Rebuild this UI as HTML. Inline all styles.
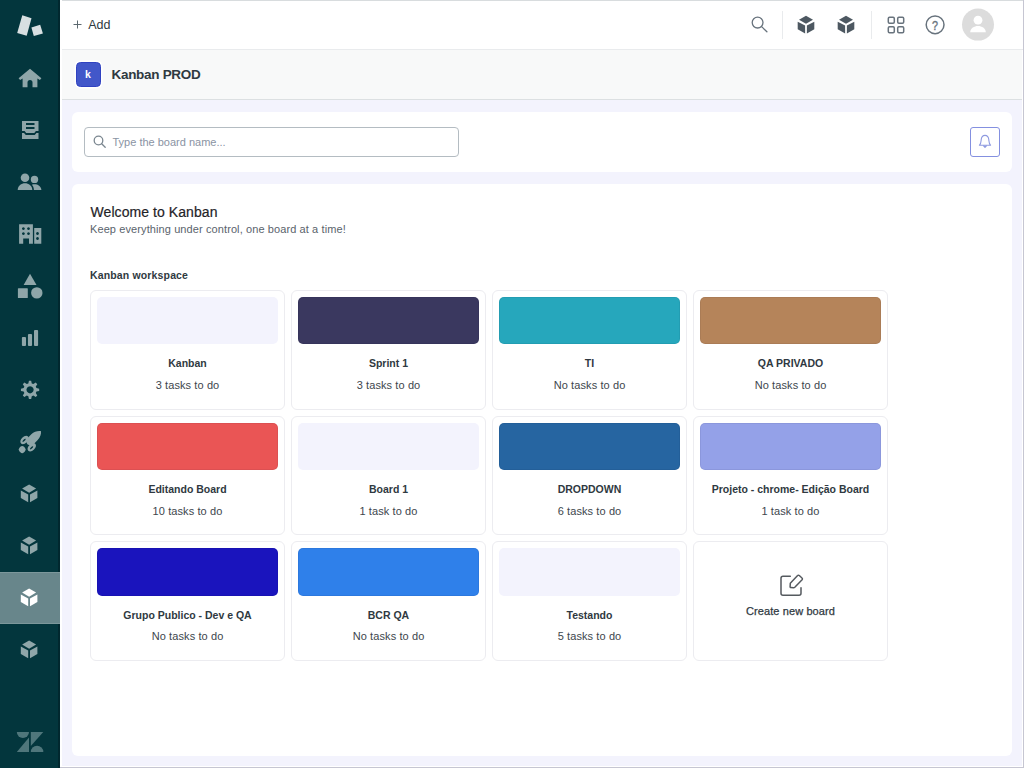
<!DOCTYPE html>
<html lang="en">
<head>
<meta charset="utf-8">
<title>Kanban PROD</title>
<style>
*{box-sizing:border-box;margin:0;padding:0}
html,body{width:1024px;height:768px;overflow:hidden;background:#fff}
body{font-family:"Liberation Sans",sans-serif;color:#2f3941;position:relative;-webkit-font-smoothing:antialiased}
.abs{position:absolute}
/* sidebar */
#side{position:absolute;left:0;top:0;width:60px;height:768px;background:#03363d;box-shadow:inset -2px 0 0 #01282f}
#side .on{position:absolute;left:0;top:572px;width:60px;height:52px;background:#68868b;border:1px solid #7c979b;border-left:0;border-right:0}
#side svg{position:absolute;left:0;top:0;display:block}
/* top bar */
#top{position:absolute;left:60px;top:0;width:964px;height:50px;background:#fff;border-top:1px solid #d8dcde;border-bottom:1px solid #e9ebed}
#topsvg{position:absolute;left:0;top:0;display:block}
#add{position:absolute;left:28.2px;top:16px;font-size:12.5px;color:#2f3941;line-height:16px;white-space:nowrap}
#apphead{position:absolute;left:62px;top:50px;width:960px;height:50px;background:#f8f9f9;border-bottom:1px solid #dce0e2}
#kicon{position:absolute;left:14px;top:12px;width:25px;height:25px;border-radius:4.5px;background:#4257c9;border:1px solid #3042c1;box-shadow:0 0 0 1.5px #fff;color:#fff;font-size:10.5px;font-weight:bold;text-align:center;line-height:22.5px;text-indent:-1px}
#ktitle{position:absolute;left:49.5px;top:15px;font-size:13.5px;font-weight:bold;color:#2f3941;line-height:20px;white-space:nowrap;letter-spacing:-0.3px}
/* content */
#content{position:absolute;left:62px;top:100px;width:960px;height:666px;background:#f3f3fd}
.panel{position:absolute;background:#fff;border-radius:6px}
#search{left:10px;top:12px;width:940px;height:60px}
#sinput{position:absolute;left:12px;top:15px;width:375px;height:30px;border:1px solid #b4bcc2;border-radius:4px;background:#fff}
#sinput span{position:absolute;left:27.5px;top:8px;font-size:11px;line-height:13px;color:#8a93a3;white-space:nowrap}
#bell{position:absolute;left:898px;top:15px;width:30px;height:30px;border:1px solid #8490e0;border-radius:3px;background:#fff}
#main{left:10px;top:84px;width:940px;height:572px}
#h1{position:absolute;left:18.5px;top:19px;font-size:14px;line-height:18px;color:#1f2328;white-space:nowrap;letter-spacing:.07px;-webkit-text-stroke:.2px #1f2328}
#h2{position:absolute;left:18px;top:38px;font-size:11px;line-height:14px;color:#5a636c;white-space:nowrap;letter-spacing:.1px}
#h3{position:absolute;left:18px;top:84px;font-size:10.5px;line-height:14px;font-weight:bold;color:#2f3941;white-space:nowrap;letter-spacing:.15px}
.card{position:absolute;width:195px;height:120px;border:1px solid #ececf0;border-radius:6px;background:#fff}
.card .c{position:absolute;left:6px;top:6px;width:181px;height:47px;border-radius:5px;box-shadow:inset 0 0 0 1px rgba(0,0,40,.06)}
.card .c.d{box-shadow:none}
.card .t{position:absolute;left:0;width:193px;top:65px;text-align:center;font-size:10.5px;line-height:14px;font-weight:bold;color:#2f3941;white-space:nowrap}
.card .s{position:absolute;left:0;width:193px;top:87px;text-align:center;font-size:11px;line-height:14px;color:#3d464d;white-space:nowrap;letter-spacing:.1px}
/* frame edges */
#wl{position:absolute;left:60px;top:0;width:2px;height:767px;background:#fff}
#er{position:absolute;right:0;top:0;width:1px;height:768px;background:#c6c6d2}
#eb{position:absolute;left:60px;bottom:0;width:964px;height:1px;background:#c6c6d2}
</style>
</head>
<body>
<div id="side">
<div class="on"></div>
<svg width="60" height="768" viewBox="0 0 60 768">
<!-- product logo -->
<g fill="#d8dfe1">
<polygon points="22.3,15.3 31.5,18.2 26.7,35.8 17.2,32.9"/>
<polygon points="31.4,27.5 40.2,24.8 42.9,33.4 33.8,36.1"/>
</g>
<g fill="#8fa6a9">
<!-- home -->
<path d="M30,68.7 L41.4,78.3 L39.9,80.1 L37.4,78.6 L37.4,87.3 L32.5,87.3 L32.5,82.6 A2.5,2.5 0 0 0 27.5,82.6 L27.5,87.3 L22.6,87.3 L22.6,78.6 L20.1,80.1 L18.6,78.3 Z"/>
<!-- views -->
<path fill-rule="evenodd" d="M22,121 h16.5 v10 h-2.6 l-1.6,2 h-8.1 l-1.6,-2 h-2.6 z M26,123.1 v1.9 h8.5 v-1.9 z M26,127 v1.9 h8.5 v-1.9 z"/>
<path d="M22,133 h2 l1.8,2.1 h8.9 l1.8,-2.1 h2 v6.1 h-16.5 z"/>
<!-- customers -->
<circle cx="25" cy="177.8" r="4.3"/>
<path d="M17.7,190 C17.9,181 32.1,181 32.3,190 Z"/>
<circle cx="34.5" cy="179.4" r="3.7"/>
<path d="M33.9,190 C33.8,187.6 33,185.8 31.9,184.8 C35.5,183.4 41,185 41.4,190 Z"/>
<!-- organizations -->
<path fill-rule="evenodd" d="M19.1,224.2 h13.8 v19.5 h-3.9 v-5.2 h-5.8 v5.2 h-4.1 z M23.4,227.2 a1.4,1.4 0 1 0 0.01,0 z M28.5,227.2 a1.4,1.4 0 1 0 0.01,0 z M23.4,232.2 a1.4,1.4 0 1 0 0.01,0 z M28.5,232.2 a1.4,1.4 0 1 0 0.01,0 z"/>
<path fill-rule="evenodd" d="M34.2,228.1 h7.1 v15.6 h-7.1 z M37.5,232.1 a1.4,1.4 0 1 0 0.01,0 z M37.5,237.1 a1.4,1.4 0 1 0 0.01,0 z"/>
<!-- shapes -->
<polygon points="30,273.8 36.5,284.9 23.6,284.9"/>
<rect x="17.9" y="288.2" width="9.9" height="9.9" rx="0.6"/>
<circle cx="36.8" cy="292.9" r="5.7"/>
<!-- reporting -->
<rect x="21.9" y="337" width="4.1" height="8.9" rx="1"/>
<rect x="27.95" y="334.1" width="4.1" height="11.8" rx="1"/>
<rect x="34" y="330" width="4.1" height="15.9" rx="1"/>
<!-- gear -->
<path fill-rule="evenodd" d="M28.34,383.42 L28.93,380.67 L31.17,380.67 L31.76,383.42 L33.35,384.08 L35.71,382.55 L37.30,384.14 L35.77,386.50 L36.43,388.09 L39.18,388.68 L39.18,390.92 L36.43,391.51 L35.77,393.10 L37.30,395.46 L35.71,397.05 L33.35,395.52 L31.76,396.18 L31.17,398.93 L28.93,398.93 L28.34,396.18 L26.75,395.52 L24.39,397.05 L22.80,395.46 L24.33,393.10 L23.67,391.51 L20.92,390.92 L20.92,388.68 L23.67,388.09 L24.33,386.50 L22.80,384.14 L24.39,382.55 L26.75,384.08 Z M30.05,386.20 a3.60,3.60 0 1 0 0.01,0 z"/>
<!-- rocket -->
<g transform="translate(34,437.6) rotate(45)">
<path d="M0.3,-9.5 C2.6,-8 4.4,-4.5 4.4,-0.5 L4.4,4 C4.4,6.5 3,8.8 0,9.4 C-3,8.8 -4.3,6.5 -4.3,4 L-4.3,-0.5 C-4.3,-4.5 -2,-8 0.3,-9.5 Z"/>
<path fill-rule="evenodd" d="M-5,3.4 C-6.9,3.4 -8.2,5.6 -8.2,8.4 C-8.2,11.2 -6.9,13.3 -5,13.3 C-3.1,13.3 -1.9,11.2 -1.9,8.4 C-1.9,5.6 -3.1,3.4 -5,3.4 Z M-5.1,6.8 C-5.6,6.8 -5.9,7.7 -5.9,8.9 C-5.9,10.1 -5.6,11 -5.1,11 C-4.6,11 -4.3,10.1 -4.3,8.9 C-4.3,7.7 -4.6,6.8 -5.1,6.8 Z"/>
<path fill-rule="evenodd" d="M5.2,3.4 C7.1,3.4 8.4,5.6 8.4,8.4 C8.4,11.2 7.1,13.3 5.2,13.3 C3.3,13.3 2.1,11.2 2.1,8.4 C2.1,5.6 3.3,3.4 5.2,3.4 Z M5.5,6.8 C6,6.8 6.3,7.7 6.3,8.9 C6.3,10.1 6,11 5.5,11 C5,11 4.7,10.1 4.7,8.9 C4.7,7.7 5,6.8 5.5,6.8 Z"/>
<rect x="-3.1" y="13.6" width="6.4" height="6.4" rx="2.6"/>
</g>
<!-- cubes -->
<g id="cubeA">
<polygon points="29.1,484.6 36.1,488.6 29.1,492.7 22.1,488.6"/>
<polygon points="20.8,490.6 28.2,494.4 28.2,502.3 20.8,498.1"/>
<polygon points="30,494.4 37.4,490.6 37.4,498.1 30,502.3"/>
</g>
<use href="#cubeA" y="52"/>
<use href="#cubeA" y="156"/>
</g>
<use href="#cubeA" y="104" fill="#ffffff"/>
<!-- zendesk -->
<g fill="#4f767b">
<path d="M16.8,731.9 H29 A6.1,6.1 0 0 1 16.8,731.9 Z"/>
<polygon points="29,737.6 29,751.9 16.8,751.9"/>
<polygon points="30.8,731.9 43.3,731.9 30.8,746"/>
<path d="M30.8,751.9 A6.25,6.25 0 0 1 43.3,751.9 Z"/>
</g>
</svg>
</div>
<div id="top">
  <svg id="topsvg" width="964" height="49" viewBox="60 1 964 49">
    <path d="M73.5,24.5 H81.5 M77.5,20.5 V28.5" stroke="#5c6970" stroke-width="1" fill="none"/>
    <g fill="none" stroke="#68737d" stroke-width="1.3" stroke-linecap="round">
      <circle cx="757.6" cy="22.6" r="5.4"/>
      <path d="M761.6,26.6 L766.9,31.8"/>
    </g>
    <rect x="782" y="11" width="1" height="28" fill="#e9ebed"/>
    <rect x="871" y="11" width="1" height="28" fill="#e9ebed"/>
    <g id="cubeT" fill="#4d5861">
      <polygon points="806,15.7 813,19.7 806,23.8 799,19.7"/>
      <polygon points="797.7,21.7 805.1,25.5 805.1,33.4 797.7,29.2"/>
      <polygon points="806.9,25.5 814.3,21.7 814.3,29.2 806.9,33.4"/>
    </g>
    <use href="#cubeT" x="40"/>
    <g fill="none" stroke="#68737d" stroke-width="1.5">
      <rect x="888.3" y="17.3" width="6" height="6" rx="1.2"/>
      <rect x="897.7" y="17.3" width="6" height="6" rx="1.2"/>
      <rect x="888.3" y="26.7" width="6" height="6" rx="1.2"/>
      <rect x="897.7" y="26.7" width="6" height="6" rx="1.2"/>
      <circle cx="935.1" cy="24.8" r="8.9"/>
    </g>
    <text x="935.1" y="29.8" text-anchor="middle" font-family="Liberation Sans, sans-serif" font-size="13.5" fill="#68737d" stroke="#68737d" stroke-width=".4" textLength="6" lengthAdjust="spacingAndGlyphs">?</text>
    <circle cx="978" cy="24.6" r="16" fill="#dcdcdc"/>
    <circle cx="978" cy="20.2" r="4.4" fill="#ffffff"/>
    <path d="M970.2,32.3 C970.6,24 985.4,24 985.8,32.3 Z" fill="#ffffff"/>
  </svg>
  <div id="add">Add</div>
</div>
<div id="apphead">
  <div id="kicon">k</div>
  <div id="ktitle">Kanban PROD</div>
</div>
<div id="content">
  <div class="panel" id="search">
    <div id="sinput"><svg width="16" height="16" viewBox="0 0 16 16" style="position:absolute;left:7px;top:6px"><g fill="none" stroke="#7b8790" stroke-width="1.3" stroke-linecap="round"><circle cx="6.5" cy="6.5" r="4.3"/><path d="M9.7,9.7 L13.2,13.2"/></g></svg><span>Type the board name...</span></div>
    <div id="bell"><svg width="28" height="28" viewBox="0 0 28 28" style="position:absolute;left:0;top:-0.7px"><g fill="none" stroke="#8e9ae0" stroke-width="1.1" stroke-linejoin="round" stroke-linecap="round"><path d="M8.4,18.2 C10.1,17 10,14.6 10.2,12.6 C10.5,9.9 12,8.4 14,8.4 C16,8.4 17.5,9.9 17.8,12.6 C18,14.6 17.9,17 19.6,18.2 Z"/><path d="M12.6,18.8 L14,20.3 L15.4,18.8" fill="#8e9ae0"/></g></svg></div>
  </div>
  <div class="panel" id="main">
    <div id="h1">Welcome to Kanban</div>
    <div id="h2">Keep everything under control, one board at a time!</div>
    <div id="h3">Kanban workspace</div>

    <div class="card" style="left:18px;top:106px"><div class="c d" style="background:#f3f3fd"></div><div class="t">Kanban</div><div class="s">3 tasks to do</div></div>
    <div class="card" style="left:219px;top:106px"><div class="c" style="background:#3a385f"></div><div class="t">Sprint 1</div><div class="s">3 tasks to do</div></div>
    <div class="card" style="left:420px;top:106px"><div class="c" style="background:#26a7bc"></div><div class="t">TI</div><div class="s">No tasks to do</div></div>
    <div class="card" style="left:621px;top:106px"><div class="c" style="background:#b5845a"></div><div class="t">QA PRIVADO</div><div class="s">No tasks to do</div></div>

    <div class="card" style="left:18px;top:232px;height:119px"><div class="c" style="background:#ea5555"></div><div class="t">Editando Board</div><div class="s">10 tasks to do</div></div>
    <div class="card" style="left:219px;top:232px;height:119px"><div class="c d" style="background:#f3f3fd"></div><div class="t">Board 1</div><div class="s">1 task to do</div></div>
    <div class="card" style="left:420px;top:232px;height:119px"><div class="c" style="background:#2665a1"></div><div class="t">DROPDOWN</div><div class="s">6 tasks to do</div></div>
    <div class="card" style="left:621px;top:232px;height:119px"><div class="c" style="background:#94a1e8"></div><div class="t">Projeto - chrome- Edição Board</div><div class="s">1 task to do</div></div>

    <div class="card" style="left:18px;top:357px"><div class="c" style="height:48px;background:#1a14bd"></div><div class="t" style="top:66px">Grupo Publico - Dev e QA</div><div class="s">No tasks to do</div></div>
    <div class="card" style="left:219px;top:357px"><div class="c" style="height:48px;background:#2f80ea"></div><div class="t" style="top:66px">BCR QA</div><div class="s">No tasks to do</div></div>
    <div class="card" style="left:420px;top:357px"><div class="c d" style="height:48px;background:#f3f3fd"></div><div class="t" style="top:66px">Testando</div><div class="s">5 tasks to do</div></div>
    <div class="card" style="left:621px;top:357px"><svg width="30" height="30" viewBox="775 570 30 30" style="position:absolute;left:81px;top:28px"><g fill="none" stroke="#555a5f" stroke-width="1.5" stroke-linecap="round" stroke-linejoin="round"><path d="M790.3,576.3 H783 A2,2 0 0 0 781,578.3 V593.3 A2,2 0 0 0 783,595.3 H799 A2,2 0 0 0 801,593.3 V587.8"/><path d="M790.3,583.3 L797.6,575.6 A1.2,1.2 0 0 1 799.3,575.5 L802,578 A1.2,1.2 0 0 1 802.1,579.7 L794.8,587.2 A2,2 0 0 1 793.6,587.7 L790.9,587.6 A0.8,0.8 0 0 1 790.1,586.8 Z"/></g></svg><div class="t" style="top:62px;font-weight:normal;font-size:11px;letter-spacing:.1px;-webkit-text-stroke:.25px #2f3941">Create new board</div></div>
  </div>
</div>
<div id="wl"></div>
<div id="er"></div>
<div id="eb"></div>
</body>
</html>
